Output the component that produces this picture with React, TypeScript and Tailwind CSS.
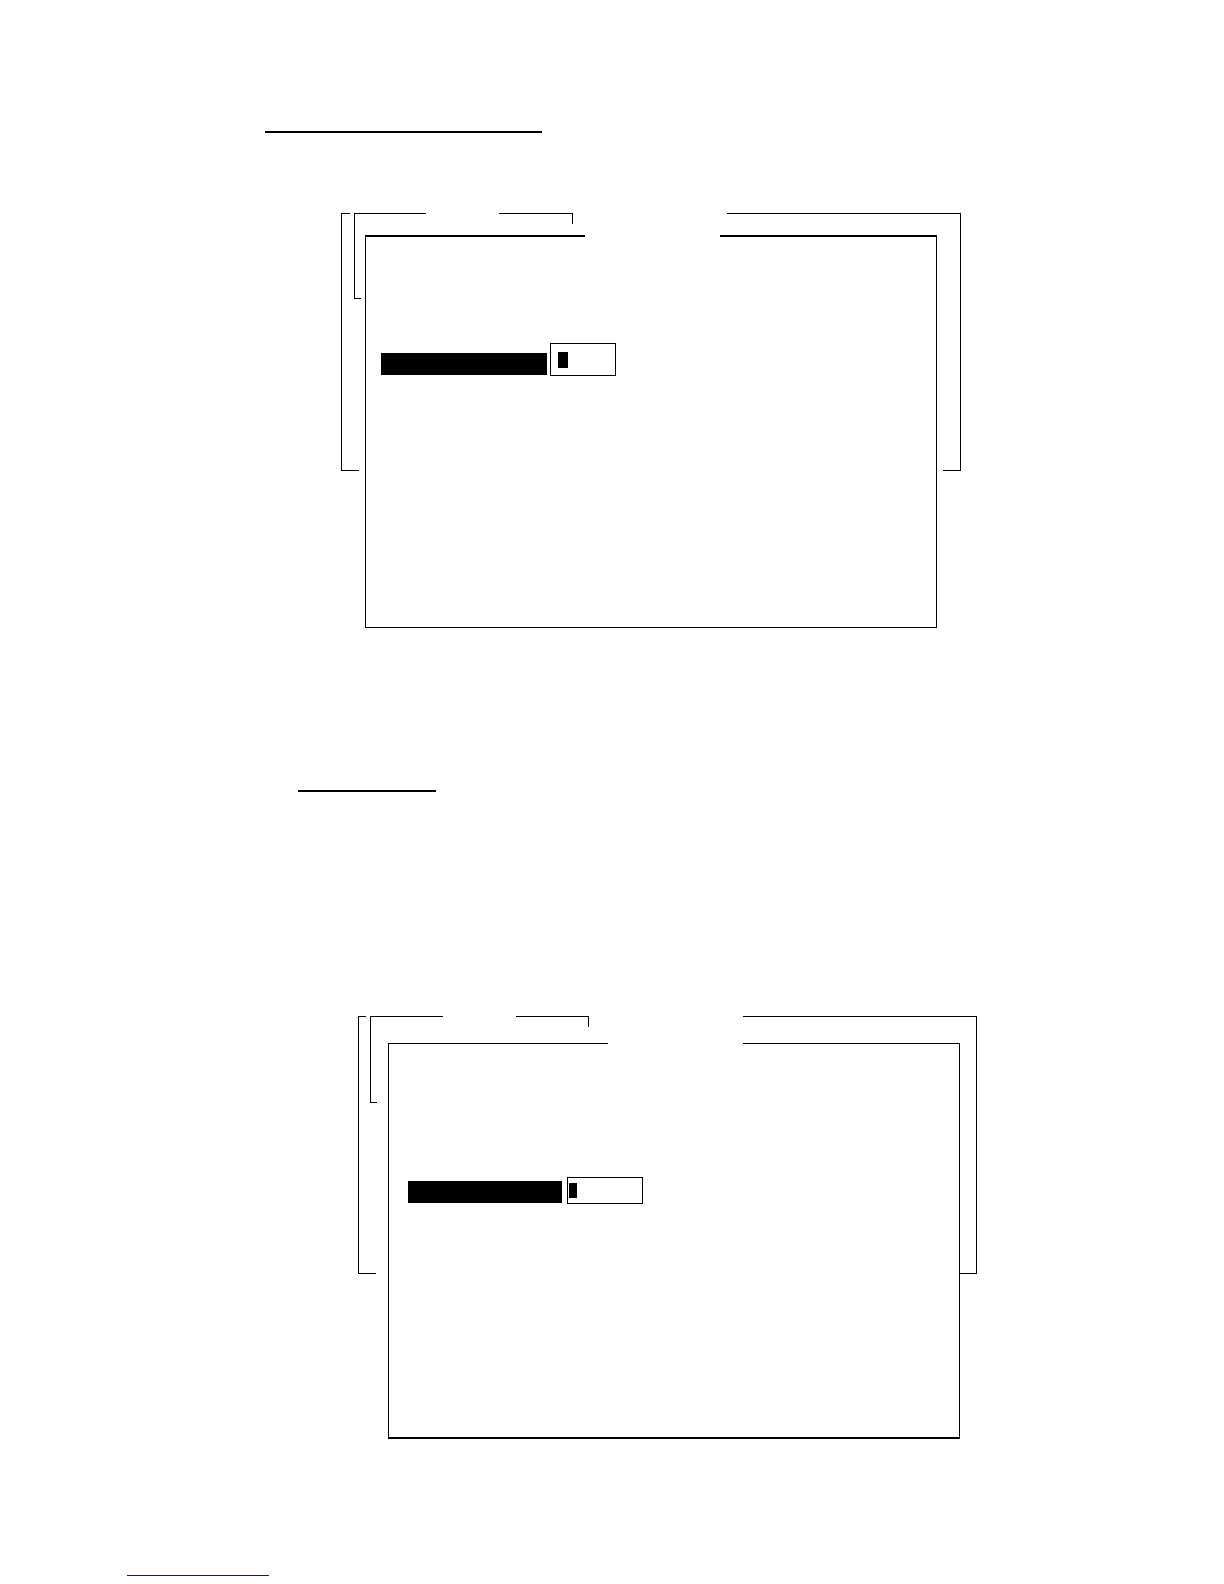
import React from "react";

type ScreenProps = {
    id: string;
    label: string;
    className: string;
    hook: string;
    menuLeft: string;
    menuRight: string;
    menuSide: string;
    rightEdge: string;
    panel: string;
    titleLine: string;
    body: string;
    labelBar: string;
    field: string;
    cursor: string;
}

// Two windows at the back, with gaps in their top edges for the titles
function BackWindows({ hook, menuLeft, menuRight, menuSide, rightEdge }: Pick<ScreenProps, "hook" | "menuLeft" | "menuRight" | "menuSide" | "rightEdge">) {
    return (
        <div className="absolute inset-x-0 top-0 h-[258px] flex justify-between pointer-events-none">
            <div className="w-[18px] border-l border-b border-black"></div>
            <div className={`${rightEdge} border-r border-b border-black`}></div>
            <div className="absolute inset-x-0 top-0 flex items-start">
                <div className={`${hook} border-t border-black`}></div>
                <div className={`${menuLeft} ml-1 relative border-t border-black`}>
                    <div className={`${menuSide} absolute left-0 -top-px w-[7px] border-l border-b border-black`}></div>
                </div>
                <div className={`${menuRight} ml-[73px] h-[11px] border-t border-r border-black`}></div>
                <div className="flex-1 ml-[154px] border-t border-black"></div>
            </div>
        </div>
    )
}

function Screen(props: ScreenProps) {
    return (
        <section className={`relative flow-root ${props.className}`}>
            <BackWindows
                hook={props.hook}
                menuLeft={props.menuLeft}
                menuRight={props.menuRight}
                menuSide={props.menuSide}
                rightEdge={props.rightEdge}
            />
            <div className={`relative ${props.panel}`}>
                <div className="flex">
                    <div className={`w-[220px] bg-black ${props.titleLine}`}></div>
                    <div className={`flex-1 ml-[135px] bg-black ${props.titleLine}`}></div>
                </div>
                <form className={`flex items-end border-x border-black ${props.body}`}>
                    <label htmlFor={props.id} aria-label={props.label} className={`h-[22px] mb-px bg-black ${props.labelBar}`}></label>
                    <div className="relative flex">
                        <input id={props.id} type="text" aria-label={props.label} className={`border border-black outline-none ${props.field}`} />
                        <span className={`absolute bg-black pointer-events-none ${props.cursor}`}></span>
                    </div>
                </form>
            </div>
        </section>
    )
}

export default function App() {
    return (
        <main className="bg-white pt-[131px] pb-2 font-['Liberation_Sans',sans-serif]">
            <div className="ml-[265px] w-[277px] h-0.5 bg-black"></div>
            <Screen
                id="first-field"
                label="First field"
                className="mt-20 ml-[341px] mr-[263px]"
                hook="w-[9px]"
                menuLeft="w-[72px]"
                menuRight="w-[74px]"
                menuSide="h-[86px]"
                rightEdge="w-[18px]"
                panel="mt-[22px] mx-6"
                titleLine="h-0.5"
                body="border-b pt-[106px] pb-[251px] pl-[15px] gap-[3px]"
                labelBar="w-[166px]"
                field="w-[66px] h-[33px] pl-5"
                cursor="left-2 top-[9px] w-2.5 h-4"
            />
            <div className="mt-[162px] ml-[298px] w-[138px] h-0.5 bg-black"></div>
            <Screen
                id="second-field"
                label="Second field"
                className="mt-56 ml-[358px] mr-[247px]"
                hook="w-2"
                menuLeft="w-[73px]"
                menuRight="w-[73px]"
                menuSide="h-[87px]"
                rightEdge="w-[17px]"
                panel="mt-[27px] ml-[30px] mr-[17px]"
                titleLine="h-px"
                body="border-b-2 pt-[133px] pb-[233px] pl-[19px] gap-[5px]"
                labelBar="w-[154px]"
                field="w-[76px] h-[27px] pl-3"
                cursor="left-0.5 top-1.5 w-2 h-[15px]"
            />
            <a href="#top" aria-label="Back to top" className="block mt-[136px] ml-[127px] w-[142px] h-px bg-[#14148c]"></a>
        </main>
    )
}
